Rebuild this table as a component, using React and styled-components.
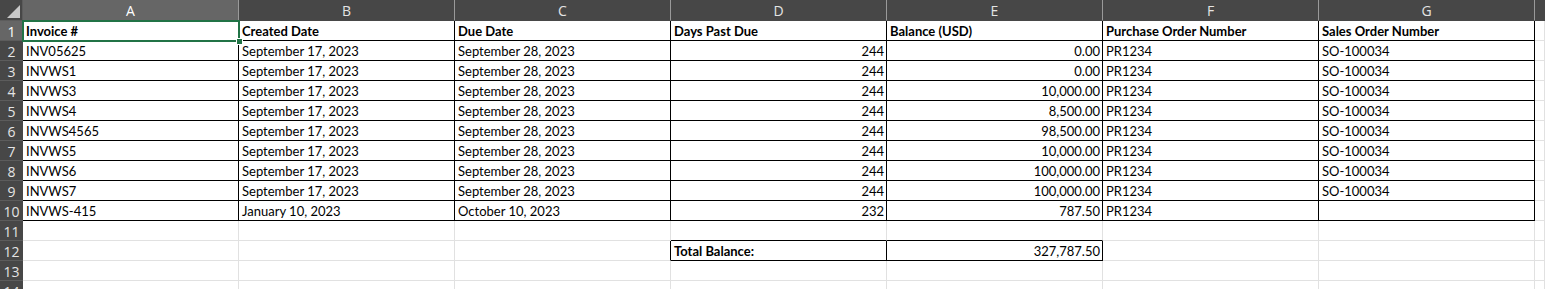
import styled, { createGlobalStyle } from 'styled-components'

const GlobalStyle = createGlobalStyle`
  html, body {
    margin: 0;
    padding: 0;
    background: #ffffff;
    overflow: hidden;
  }
`

const COLS = ['A', 'B', 'C', 'D', 'E', 'F', 'G']

const Sheet = styled.div`
  display: grid;
  grid-template-columns: 23px repeat(7, 216px) 1fr;
  grid-template-rows: 21px;
  grid-auto-rows: 20px;
  width: 1545px;
  height: 289px;
  overflow: hidden;
  font-family: Lato, 'Liberation Sans', sans-serif;
`

const Corner = styled.div`
  position: relative;
  background: #474747;
  border-right: 1px solid #5c5c5c;
  border-bottom: 1px solid #5c5c5c;
  box-sizing: border-box;

  &::after {
    content: '';
    position: absolute;
    right: 2px;
    bottom: 2px;
    width: 0;
    height: 0;
    border-left: 13px solid transparent;
    border-bottom: 13px solid #c8c8c8;
  }
`

const ColHeader = styled.div`
  box-sizing: border-box;
  background: ${({ selected }) => (selected ? '#666666' : '#474747')};
  border-right: 1px solid #9a9a9a;
  border-bottom: 1px solid #474747;
  color: ${({ selected }) => (selected ? '#ffffff' : '#e4e4e4')};
  font-family: 'Open Sans', 'Liberation Sans', sans-serif;
  font-size: 14px;
  display: flex;
  align-items: center;
  justify-content: center;
  padding-top: 1px;
`

const RowHeader = styled.div`
  box-sizing: border-box;
  background: ${({ selected }) => (selected ? '#666666' : '#474747')};
  border-bottom: 1px solid #5c5c5c;
  color: ${({ selected }) => (selected ? '#ffffff' : '#e4e4e4')};
  font-family: 'Open Sans', 'Liberation Sans', sans-serif;
  font-size: 14px;
  display: flex;
  align-items: center;
  justify-content: center;
  padding-top: 1px;
`

const Cell = styled.div`
  position: relative;
  box-sizing: border-box;
  background: #ffffff;
  border-right: 1px solid ${({ $edgeRight }) => ($edgeRight ? '#000000' : '#e1e1e1')};
  border-bottom: 1px solid ${({ $edgeBottom }) => ($edgeBottom ? '#000000' : '#e1e1e1')};
  color: #000000;
  font-size: 13px;
  font-weight: ${({ $bold }) => ($bold ? 700 : 400)};
  line-height: 19px;
  padding: 1px 2px 0 3px;
  text-align: ${({ $right }) => ($right ? 'right' : 'left')};
  white-space: nowrap;
`

const Selection = styled.div`
  position: absolute;
  z-index: 2;
  left: -1px;
  top: -1px;
  right: -2px;
  bottom: -2px;
  border: 2px solid #217346;
  pointer-events: none;

  &::after {
    content: '';
    position: absolute;
    right: -5px;
    bottom: -5px;
    width: 5px;
    height: 5px;
    background: #217346;
    border: 1px solid #ffffff;
  }
`

const Filler = styled.div`
  box-sizing: border-box;
  background: #474747;
`

const SPEC = [
  ['Invoice #', 'Created Date', 'Due Date', 'Days Past Due', 'Balance (USD)', 'Purchase Order Number', 'Sales Order Number'],
  ['INV05625', 'September 17, 2023', 'September 28, 2023', '244', '0.00', 'PR1234', 'SO-100034'],
  ['INVWS1', 'September 17, 2023', 'September 28, 2023', '244', '0.00', 'PR1234', 'SO-100034'],
  ['INVWS3', 'September 17, 2023', 'September 28, 2023', '244', '10,000.00', 'PR1234', 'SO-100034'],
  ['INVWS4', 'September 17, 2023', 'September 28, 2023', '244', '8,500.00', 'PR1234', 'SO-100034'],
  ['INVWS4565', 'September 17, 2023', 'September 28, 2023', '244', '98,500.00', 'PR1234', 'SO-100034'],
  ['INVWS5', 'September 17, 2023', 'September 28, 2023', '244', '10,000.00', 'PR1234', 'SO-100034'],
  ['INVWS6', 'September 17, 2023', 'September 28, 2023', '244', '100,000.00', 'PR1234', 'SO-100034'],
  ['INVWS7', 'September 17, 2023', 'September 28, 2023', '244', '100,000.00', 'PR1234', 'SO-100034'],
  ['INVWS-415', 'January 10, 2023', 'October 10, 2023', '232', '787.50', 'PR1234', ''],
  ['', '', '', '', '', '', ''],
  ['', '', '', 'Total Balance:', '327,787.50', '', ''],
  ['', '', '', '', '', '', ''],
  ['', '', '', '', '', '', ''],
]

// which cells carry the black outline
const boxed = (r, c) => {
  if (r >= 0 && r <= 9 && c >= 0 && c <= 6) return true
  if (r === 11 && (c === 3 || c === 4)) return true
  return false
}

const isNumeric = (r, c) => r >= 1 && (c === 3 || c === 4) && /^[\d,.]+$/.test(SPEC[r][c])
const isBold = (r, c) => r === 0 || (r === 11 && c === 3)

export default function App() {
  return (
    <>
      <GlobalStyle />
      <Sheet>
        <Corner />
        {COLS.map((letter, i) => (
          <ColHeader key={letter} selected={i === 0}>
            {letter}
          </ColHeader>
        ))}
        <Filler />
        {SPEC.map((row, r) => (
          <Row key={r} row={row} r={r} />
        ))}
      </Sheet>
    </>
  )
}

const Row = ({ row, r }) => (
  <>
    <RowHeader selected={r === 0}>{r + 1}</RowHeader>
    {row.map((text, c) => (
      <Cell
        key={c}
        $edgeRight={boxed(r, c) || boxed(r, c + 1)}
        $edgeBottom={boxed(r, c) || boxed(r + 1, c)}
        $right={isNumeric(r, c)}
        $bold={isBold(r, c)}
      >
        {text}
        {r === 0 && c === 0 && <Selection />}
      </Cell>
    ))}
    <Cell />
  </>
)
